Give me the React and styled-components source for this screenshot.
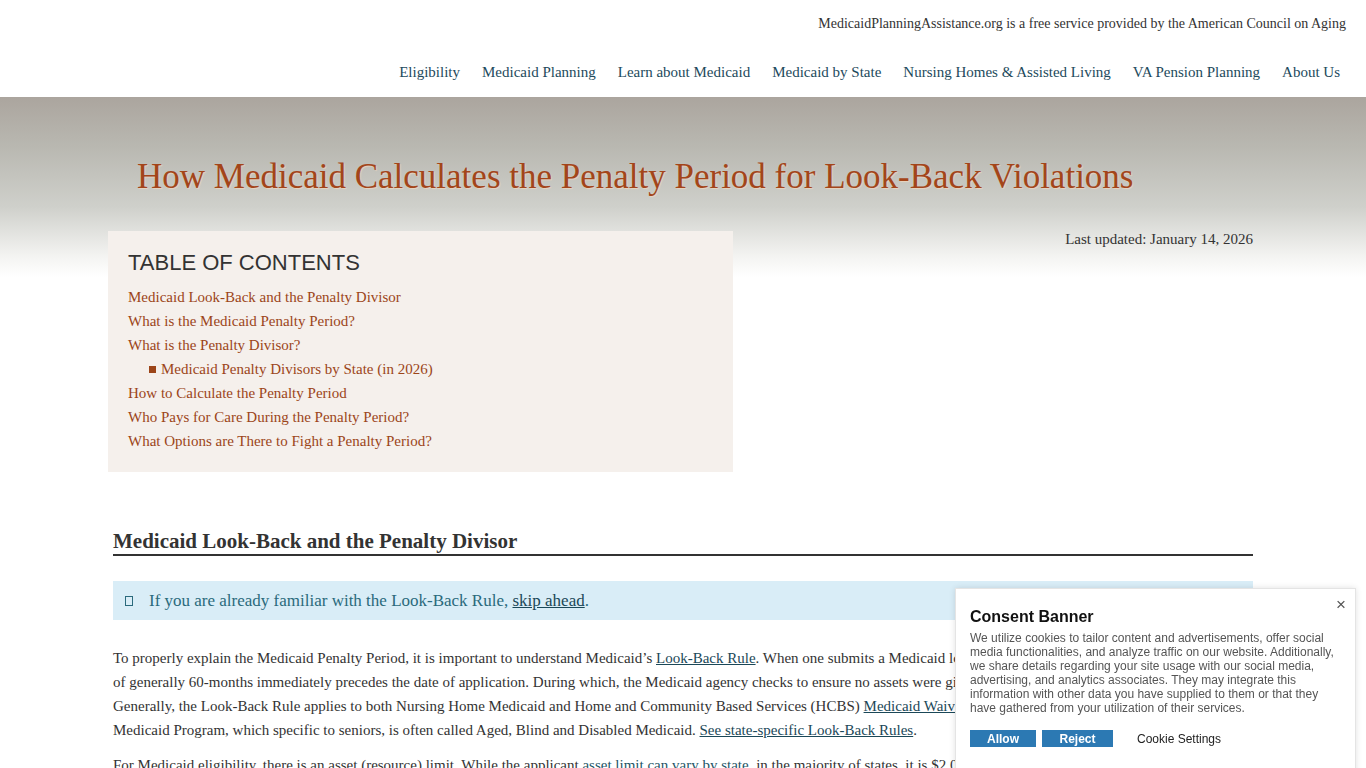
import React from "react";
import styled, { createGlobalStyle } from "styled-components";

const GlobalStyle = createGlobalStyle`
  html, body {
    margin: 0;
    padding: 0;
    background: #fff;
    font-family: "Liberation Serif", "Times New Roman", serif;
    color: #333;
  }
  * { box-sizing: border-box; }
`;

const navItems = [
  "Eligibility",
  "Medicaid Planning",
  "Learn about Medicaid",
  "Medicaid by State",
  "Nursing Homes & Assisted Living",
  "VA Pension Planning",
  "About Us",
];

const tocItems = [
  { label: "Medicaid Look-Back and the Penalty Divisor" },
  { label: "What is the Medicaid Penalty Period?" },
  { label: "What is the Penalty Divisor?" },
  { label: "Medicaid Penalty Divisors by State (in 2026)", sub: true },
  { label: "How to Calculate the Penalty Period" },
  { label: "Who Pays for Care During the Penalty Period?" },
  { label: "What Options are There to Fight a Penalty Period?" },
];

const App = () => {
  return (
    <>
      <GlobalStyle />
      <Header>
        <Tagline>
          MedicaidPlanningAssistance.org is a free service provided by the American Council on Aging
        </Tagline>
        <Nav>
          {navItems.map((item) => (
            <NavLink key={item}>{item}</NavLink>
          ))}
        </Nav>
      </Header>

      <Hero>
        <Container>
          <Title>How Medicaid Calculates the Penalty Period for Look-Back Violations</Title>
          <TopRow>
            <Toc>
              <TocTitle>TABLE OF CONTENTS</TocTitle>
              <TocList>
                {tocItems.map((item) => (
                  <TocItem key={item.label} $sub={item.sub}>
                    {item.sub && <Bullet />}
                    {item.label}
                  </TocItem>
                ))}
              </TocList>
            </Toc>
            <Updated>Last updated: January 14, 2026</Updated>
          </TopRow>

          <SectionTitle>Medicaid Look-Back and the Penalty Divisor</SectionTitle>

          <InfoBox>
            <InfoIcon />
            If you are already familiar with the Look-Back Rule, <TextLink>skip ahead</TextLink>.
          </InfoBox>

          <Paragraph>
            To properly explain the Medicaid Penalty Period, it is important to understand Medicaid’s{" "}
            <TextLink>Look-Back Rule</TextLink>. When one submits a Medicaid long-term care application, a look-back period
            <br />
            of generally 60-months immediately precedes the date of application. During which, the Medicaid agency checks
            to ensure no assets were gifted or sold for less than fair market value. Generally, the Look-Back Rule applies
            to both Nursing Home Medicaid and Home and Community Based Services (HCBS){" "}
            <TextLink>Medicaid Waivers</TextLink>, but not to Regular Medicaid. The Regular Medicaid Program, which
            specific to seniors, is often called Aged, Blind and Disabled Medicaid.{" "}
            <TextLink>See state-specific Look-Back Rules</TextLink>.
          </Paragraph>
          <Paragraph>
            For Medicaid eligibility, there is an asset (resource) limit. While the applicant{" "}
            <SoftLink>asset limit can vary by state</SoftLink>, in the majority of states, it is $2,000. If one has assets
            over Medicaid’s limit, they may be tempted to give them away to family members in order to become eligible.
          </Paragraph>
        </Container>
      </Hero>

      <Consent>
        <Close>×</Close>
        <ConsentTitle>Consent Banner</ConsentTitle>
        <ConsentText>
          We utilize cookies to tailor content and advertisements, offer social media functionalities, and analyze
          traffic on our website. Additionally, we share details regarding your site usage with our social media,
          advertising, and analytics associates. They may integrate this information with other data you have supplied
          to them or that they have gathered from your utilization of their services.
        </ConsentText>
        <ConsentActions>
          <ConsentButton $w={66}>Allow</ConsentButton>
          <ConsentButton $w={71}>Reject</ConsentButton>
          <SettingsLink>Cookie Settings</SettingsLink>
        </ConsentActions>
      </Consent>
    </>
  );
};

const Header = styled.header`
  height: 97px;
  display: flex;
  flex-direction: column;
  align-items: flex-end;
  padding: 15px 20px 0 0;
`;

const Tagline = styled.div`
  font-size: 14px;
  line-height: 18px;
  color: #333;
`;

const Nav = styled.nav`
  display: flex;
  margin-top: 29px;
  margin-right: 6px;
  gap: 22px;
`;

const NavLink = styled.a`
  font-size: 15px;
  line-height: 20px;
  color: #1d4a5c;
  cursor: pointer;
`;

const Hero = styled.main`
  background: linear-gradient(to bottom, #aba59e 0, #b9b8b1 50px, #cfd0cb 110px, #f4f4f2 160px, #fff 180px);
  padding-bottom: 40px;
`;

const Container = styled.div`
  width: 1140px;
  margin: 0 auto;
`;

const Title = styled.h1`
  margin: 0;
  padding: 59px 0 0 24px;
  font-weight: normal;
  font-size: 35px;
  line-height: 41px;
  color: #a3451a;
  text-shadow: 1px 1px 1px rgba(255, 220, 190, 0.6);
`;

const TopRow = styled.div`
  display: flex;
  justify-content: space-between;
  align-items: flex-start;
  margin-top: 34px;
`;

const Toc = styled.nav`
  width: 625px;
  margin-left: -5px;
  background: #f5f0ec;
  padding: 19px 20px 19px;
`;

const TocTitle = styled.h3`
  margin: 0 0 9px;
  font-family: "Liberation Sans", Arial, sans-serif;
  font-weight: normal;
  font-size: 22px;
  line-height: 26px;
  color: #333;
`;

const TocList = styled.ul`
  list-style: none;
  margin: 0;
  padding: 0;
`;

const TocItem = styled.li`
  font-size: 15px;
  line-height: 24px;
  color: #9c4519;
  padding-left: ${(p) => (p.$sub ? "21px" : "0")};
  display: flex;
  align-items: center;
`;

const Bullet = styled.span`
  width: 7px;
  height: 7px;
  background: #9c4519;
  margin-right: 5px;
  margin-top: 1px;
`;

const Updated = styled.div`
  font-size: 15px;
  line-height: 18px;
  color: #333;
  margin-top: -1px;
`;

const SectionTitle = styled.h2`
  margin: 57px 0 0;
  font-size: 21px;
  line-height: 25px;
  font-weight: bold;
  color: #333;
  padding-bottom: 0;
  border-bottom: 2px solid #333;
`;

const InfoBox = styled.div`
  margin-top: 25px;
  background: #d9edf7;
  height: 39px;
  display: flex;
  align-items: center;
  padding-left: 12px;
  font-size: 17px;
  color: #2a6a7c;
  white-space: pre;
`;

const InfoIcon = styled.span`
  width: 8px;
  height: 10px;
  border: 1px solid #2a6a7c;
  margin-right: 16px;
  margin-top: 1px;
`;

const TextLink = styled.a`
  color: #1b4858;
  text-decoration: underline;
  cursor: pointer;
`;

const SoftLink = styled.a`
  color: #1d5566;
  text-decoration: none;
  cursor: pointer;
`;

const Paragraph = styled.p`
  margin: 26px 0 11px;
  font-size: 15px;
  line-height: 24px;
  color: #333;
  & + & {
    margin-top: 0;
  }
`;

const Consent = styled.aside`
  position: fixed;
  left: 955px;
  top: 588px;
  width: 401px;
  height: 200px;
  background: #fff;
  border: 1px solid #e4e4e4;
  box-shadow: 0 0 6px rgba(0, 0, 0, 0.12);
  padding: 19px 15px 0 14px;
  font-family: "Liberation Sans", Arial, sans-serif;
`;

const Close = styled.span`
  position: absolute;
  right: 9px;
  top: 6px;
  font-size: 17px;
  color: #555;
  cursor: pointer;
`;

const ConsentTitle = styled.div`
  font-size: 16px;
  font-weight: bold;
  line-height: 18px;
  color: #111;
`;

const ConsentText = styled.p`
  margin: 5px 0 0;
  font-size: 12px;
  line-height: 14px;
  color: #555;
`;

const ConsentActions = styled.div`
  display: flex;
  align-items: center;
  margin-top: 15px;
  gap: 6px;
`;

const ConsentButton = styled.button`
  width: ${(p) => p.$w}px;
  height: 17px;
  border: none;
  padding: 0;
  background: #2c79b3;
  color: #fff;
  font-family: inherit;
  font-weight: bold;
  font-size: 12px;
`;

const SettingsLink = styled.span`
  margin-left: 18px;
  font-size: 12px;
  color: #222;
`;

export default App;
